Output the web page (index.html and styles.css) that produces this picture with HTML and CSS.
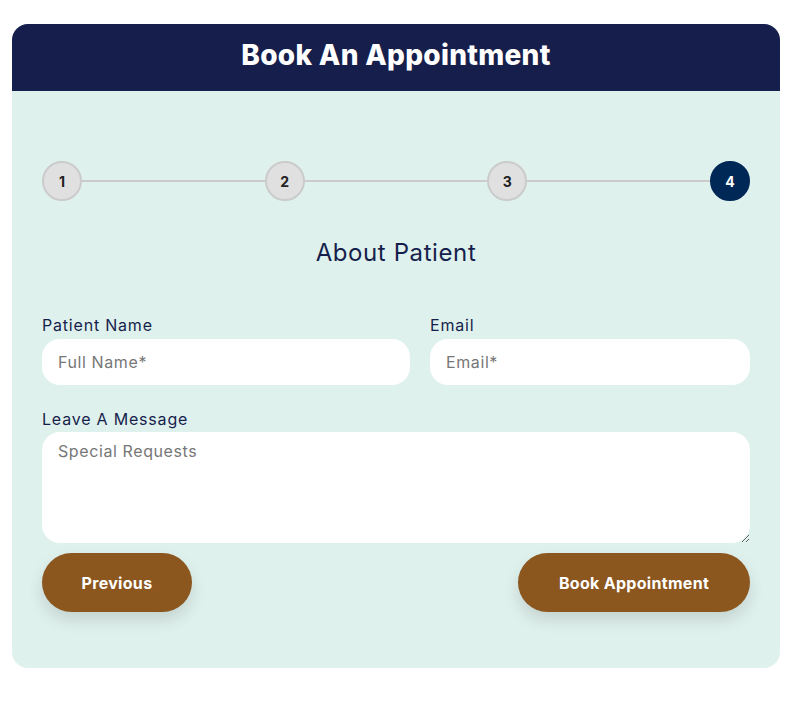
FILE: index.html
```html
<!DOCTYPE html>
<html lang="en">
<head>
<meta charset="utf-8">
<title>Book An Appointment</title>
<link rel="stylesheet" href="styles.css">
</head>
<body>
<div class="card">
  <div class="card-header">Book An Appointment</div>
  <div class="card-body">
    <div class="steps">
      <span class="step">1</span>
      <span class="line"></span>
      <span class="step">2</span>
      <span class="line"></span>
      <span class="step">3</span>
      <span class="line"></span>
      <span class="step active">4</span>
    </div>
    <h2 class="section-title">About Patient</h2>
    <div class="row">
      <div class="field">
        <label class="label">Patient Name</label>
        <input class="input" type="text" placeholder="Full Name*">
      </div>
      <div class="field">
        <label class="label">Email</label>
        <input class="input" type="email" placeholder="Email*">
      </div>
    </div>
    <div class="field message">
      <label class="label">Leave A Message</label>
      <textarea class="textarea" placeholder="Special Requests"></textarea>
    </div>
    <div class="actions">
      <button class="btn" type="button">Previous</button>
      <button class="btn btn-wide" type="button">Book Appointment</button>
    </div>
  </div>
</div>
</body>
</html>
```
FILE: styles.css
```css
* { box-sizing: border-box; }
body {
  margin: 0;
  background: #ffffff;
  font-family: "Inter", "Open Sans", sans-serif;
}
.card {
  width: 768px;
  margin: 24px 0 0 12px;
  border-radius: 16px;
  overflow: hidden;
  background: #dff1ed;
}
.card-header {
  height: 67px;
  background: #161f4c;
  color: #ffffff;
  font-size: 28px;
  font-weight: 800;
  text-align: center;
  line-height: 62px;
  letter-spacing: 0.3px;
}
.card-body {
  padding: 70px 30px 56px;
}
.steps {
  display: flex;
  align-items: center;
}
.step {
  flex: none;
  width: 40px;
  height: 40px;
  border-radius: 50%;
  border: 2px solid #cbcbcb;
  background: #e0e0e0;
  color: #222222;
  font-size: 14px;
  font-weight: 700;
  display: flex;
  align-items: center;
  justify-content: center;
}
.step.active {
  background: #002856;
  border-color: #002856;
  color: #ffffff;
}
.line {
  flex: 1;
  height: 2px;
  background: #cbcbcb;
}
.section-title {
  margin: 37px 0 0;
  font-size: 24px;
  font-weight: 400;
  color: #161f4c;
  text-align: center;
  line-height: 30px;
  letter-spacing: 0.6px;
}
.row {
  display: grid;
  grid-template-columns: 368fr 320fr;
  column-gap: 20px;
  margin-top: 46px;
}
.field {
  display: flex;
  flex-direction: column;
}
.label {
  font-size: 16px;
  color: #161f4c;
  line-height: 22px;
  margin-bottom: 3px;
  letter-spacing: 0.8px;
}
.input, .textarea {
  border: none;
  background: #ffffff;
  border-radius: 18px;
  padding: 0 16px;
  font-family: inherit;
  font-size: 16px;
  letter-spacing: 0.6px;
  color: #333;
  outline: none;
}
.input { height: 46px; }
.input::placeholder, .textarea::placeholder { color: #777777; }
.message { margin-top: 23px; }
.message .label { margin-bottom: 2px; }
.textarea {
  height: 111px;
  padding-top: 9px;
  resize: vertical;
  display: block;
}
.actions {
  display: flex;
  justify-content: space-between;
  margin-top: 10px;
}
.btn {
  height: 59px;
  width: 150px;
  border: none;
  border-radius: 30px;
  background: #8b571f;
  color: #ffffff;
  font-family: inherit;
  font-size: 16px;
  letter-spacing: 0.3px;
  font-weight: 700;
  box-shadow: 0 8px 16px rgba(0, 0, 0, 0.12);
}
.btn-wide { width: 232px; }
```
